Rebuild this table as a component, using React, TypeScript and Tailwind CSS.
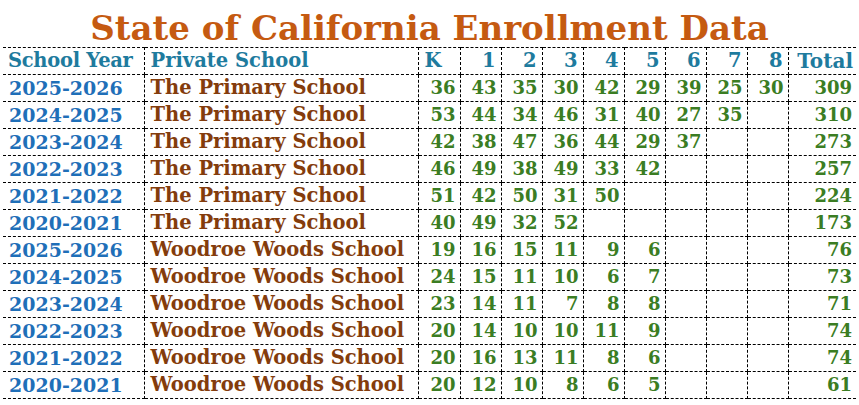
const grades = ["K", "1", "2", "3", "4", "5", "6", "7", "8"];

type Row = { year: string; school: string; counts: (number | null)[]; total: number };

const rows: Row[] = [
  { year: "2025-2026", school: "The Primary School", counts: [36, 43, 35, 30, 42, 29, 39, 25, 30], total: 309 },
  { year: "2024-2025", school: "The Primary School", counts: [53, 44, 34, 46, 31, 40, 27, 35, null], total: 310 },
  { year: "2023-2024", school: "The Primary School", counts: [42, 38, 47, 36, 44, 29, 37, null, null], total: 273 },
  { year: "2022-2023", school: "The Primary School", counts: [46, 49, 38, 49, 33, 42, null, null, null], total: 257 },
  { year: "2021-2022", school: "The Primary School", counts: [51, 42, 50, 31, 50, null, null, null, null], total: 224 },
  { year: "2020-2021", school: "The Primary School", counts: [40, 49, 32, 52, null, null, null, null, null], total: 173 },
  { year: "2025-2026", school: "Woodroe Woods School", counts: [19, 16, 15, 11, 9, 6, null, null, null], total: 76 },
  { year: "2024-2025", school: "Woodroe Woods School", counts: [24, 15, 11, 10, 6, 7, null, null, null], total: 73 },
  { year: "2023-2024", school: "Woodroe Woods School", counts: [23, 14, 11, 7, 8, 8, null, null, null], total: 71 },
  { year: "2022-2023", school: "Woodroe Woods School", counts: [20, 14, 10, 10, 11, 9, null, null, null], total: 74 },
  { year: "2021-2022", school: "Woodroe Woods School", counts: [20, 16, 13, 11, 8, 6, null, null, null], total: 74 },
  { year: "2020-2021", school: "Woodroe Woods School", counts: [20, 12, 10, 8, 6, 5, null, null, null], total: 61 },
];

const cell = "border border-dashed border-black h-[27px] p-0 leading-none";

export default function App() {
  return (
    <div className="w-[859px] h-[405px] bg-white font-['DejaVu_Serif',serif] font-bold overflow-hidden">
      <h1 className="h-[47px] pt-[11px] text-center text-[34px] leading-none text-[#c55a11]">
        State of California Enrollment Data
      </h1>

      <table className="ml-[3px] border-collapse table-fixed w-[853px]">
        <colgroup>
          <col className="w-[141px]" />
          <col className="w-[274px]" />
          <col className="w-[42px]" />
          {grades.slice(1).map((g) => (
            <col key={g} className="w-[41px]" />
          ))}
          <col className="w-[68px]" />
        </colgroup>
        <thead>
          <tr className="text-[19.5px] text-[#1e7b9e]">
            <td className={`${cell} border-l-0 pl-[5px] text-left tracking-[-0.3px]`}>School Year</td>
            <td className={`${cell} pl-[6px] text-left`}>Private School</td>
            <td className={`${cell} pl-[6px] text-left`}>K</td>
            {grades.slice(1).map((g) => (
              <td key={g} className={`${cell} pr-[5px] text-right`}>
                {g}
              </td>
            ))}
            <td className={`${cell} border-r-0 pr-[3px] text-right text-[20px]`}>Total</td>
          </tr>
        </thead>
        <tbody>
          {rows.map((r, i) => (
            <tr key={i}>
              <td className={`${cell} border-l-0 pl-[6px] text-left text-[19px] text-[#1f6fb8]`}>{r.year}</td>
              <td className={`${cell} pl-[6px] text-left text-[19.5px] text-[#843c0c]`}>{r.school}</td>
              {r.counts.map((c, j) => (
                <td key={j} className={`${cell} pr-[4px] text-right text-[18px] text-[#3b7d23]`}>
                  {c ?? ""}
                </td>
              ))}
              <td className={`${cell} border-r-0 pr-[4px] text-right text-[18px] text-[#3b7d23]`}>{r.total}</td>
            </tr>
          ))}
        </tbody>
      </table>
    </div>
  );
}
